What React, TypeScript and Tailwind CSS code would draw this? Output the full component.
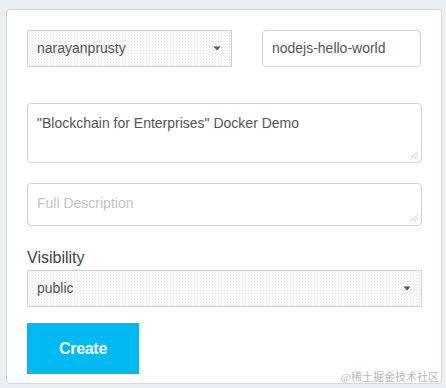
const dots =
  'bg-[#f8f8f8] bg-[radial-gradient(#e6e6e6_0.6px,transparent_0.7px)] bg-[length:3px_3px]';

function Caret() {
  return (
    <svg width="8" height="5" viewBox="0 0 8 5" className="shrink-0">
      <path d="M0.5 0.5h7L4 4.5z" fill="#555" />
    </svg>
  );
}

function Grip() {
  return (
    <svg width="8" height="8" viewBox="0 0 8 8" className="absolute right-[3px] bottom-[3px]">
      <path d="M7.5 1L1 7.5M7.5 4.5L4.5 7.5" stroke="#777" strokeWidth="0.9" strokeDasharray="1 1" />
    </svg>
  );
}

export default function App() {
  return (
    <div
      className="w-[446px] h-[388px] bg-[#e9eff4] pt-[9px] pl-[6px] pr-[4px] pb-[4px] text-[#555]"
      style={{ fontFamily: '"Liberation Sans", Arial, sans-serif' }}
    >
      <div className="relative h-full bg-white border border-[#d3d8dc] rounded-[4px] pt-[20px] pl-[20px] pr-[20px]">
        <div className="flex gap-[30px]">
          <div className={`flex items-center justify-between w-[206px] h-[37px] border border-[#cfcfcf] pl-[9px] pr-[10px] text-[14px] ${dots}`}>
            <span>narayanprusty</span>
            <Caret />
          </div>
          <div className="flex items-center w-[160px] h-[37px] border border-[#cfcfcf] rounded-[4px] pl-[9px] text-[14px]">
            nodejs-hello-world
          </div>
        </div>

        <div className="relative mt-[36px] w-[395px] h-[60px] border border-[#cfcfcf] rounded-[4px] pl-[9px] pt-[10px] text-[14px] leading-[18px]">
          "Blockchain for Enterprises" Docker Demo
          <Grip />
        </div>

        <div className="relative mt-[20px] w-[395px] h-[43px] border border-[#cfcfcf] rounded-[4px] pl-[9px] pt-[10px] text-[14px] leading-[18px] text-[#c2c2c2]">
          Full Description
          <Grip />
        </div>

        <div className="mt-[22px] text-[16px] leading-[20px] text-[#444]">Visibility</div>

        <div className={`mt-[2px] flex items-center justify-between w-[395px] h-[37px] border border-[#cfcfcf] pl-[9px] pr-[10px] text-[14px] ${dots}`}>
          <span>public</span>
          <Caret />
        </div>

        <button className="mt-[16px] w-[112px] h-[51px] bg-[#00b9f1] text-white text-[16px] font-bold tracking-[-0.3px]">
          Create
        </button>

        <div
          className="absolute right-[2px] bottom-[-1px] text-[11px] leading-[14px] text-[#b5b9bd]"
          style={{ fontFamily: '"Liberation Serif", "Noto Sans CJK SC", serif' }}
        >
          @稀土掘金技术社区
        </div>
      </div>
    </div>
  );
}
